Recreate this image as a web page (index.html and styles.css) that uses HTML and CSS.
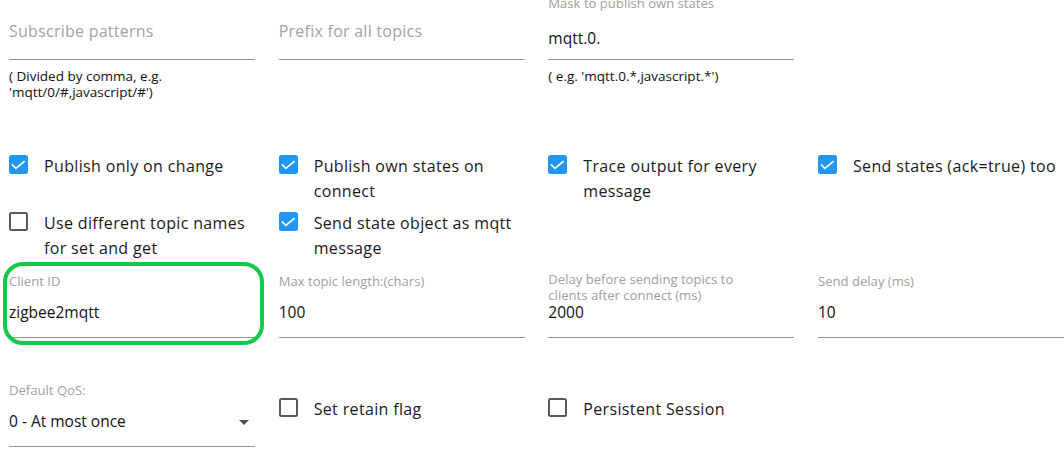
FILE: index.html
```html
<!DOCTYPE html>
<html lang="en">
<head>
<meta charset="utf-8">
<title>MQTT settings</title>
<link rel="stylesheet" href="styles.css">
</head>
<body>
<div class="form">

  <div class="row row-a">
    <div class="tf">
      <span class="tf-placeholder">Subscribe patterns</span>
      <div class="tf-input tf-input-a"></div>
      <div class="tf-helper">( Divided by comma, e.g. 'mqtt/0/#,javascript/#')</div>
    </div>
    <div class="tf">
      <span class="tf-placeholder">Prefix for all topics</span>
      <div class="tf-input tf-input-a"></div>
    </div>
    <div class="tf">
      <label class="tf-label">Mask to publish own states</label>
      <div class="tf-input tf-input-a">mqtt.0.</div>
      <div class="tf-helper">( e.g. 'mqtt.0.*,javascript.*')</div>
    </div>
    <div></div>
  </div>

  <div class="row row-b">
    <div class="cb">
      <svg class="cb-box" viewBox="0 0 19 19"><rect width="19" height="19" rx="2.5" class="cb-fill"/><path d="M3.6 10 L6.9 13.3 L15 6.6" class="cb-check"/></svg>
      <span class="cb-text">Publish only on change</span>
    </div>
    <div class="cb">
      <svg class="cb-box" viewBox="0 0 19 19"><rect width="19" height="19" rx="2.5" class="cb-fill"/><path d="M3.6 10 L6.9 13.3 L15 6.6" class="cb-check"/></svg>
      <span class="cb-text">Publish own states on connect</span>
    </div>
    <div class="cb">
      <svg class="cb-box" viewBox="0 0 19 19"><rect width="19" height="19" rx="2.5" class="cb-fill"/><path d="M3.6 10 L6.9 13.3 L15 6.6" class="cb-check"/></svg>
      <span class="cb-text">Trace output for every message</span>
    </div>
    <div class="cb">
      <svg class="cb-box" viewBox="0 0 19 19"><rect width="19" height="19" rx="2.5" class="cb-fill"/><path d="M3.6 10 L6.9 13.3 L15 6.6" class="cb-check"/></svg>
      <span class="cb-text">Send states (ack=true) too</span>
    </div>
  </div>

  <div class="row row-c">
    <div class="cb">
      <svg class="cb-box" viewBox="0 0 19 19"><rect x="1" y="1" width="17" height="17" rx="1.5" class="cb-empty"/></svg>
      <span class="cb-text">Use different topic names for set and get</span>
    </div>
    <div class="cb">
      <svg class="cb-box" viewBox="0 0 19 19"><rect width="19" height="19" rx="2.5" class="cb-fill"/><path d="M3.6 10 L6.9 13.3 L15 6.6" class="cb-check"/></svg>
      <span class="cb-text">Send state object as mqtt message</span>
    </div>
    <div></div>
    <div></div>
  </div>

  <div class="row row-d">
    <div class="tf">
      <div class="highlight"></div>
      <label class="tf-label">Client ID</label>
      <div class="tf-input">zigbee2mqtt</div>
    </div>
    <div class="tf">
      <label class="tf-label">Max topic length:(chars)</label>
      <div class="tf-input">100</div>
    </div>
    <div class="tf">
      <label class="tf-label tf-label-2">Delay before sending topics to clients after connect (ms)</label>
      <div class="tf-input">2000</div>
    </div>
    <div class="tf">
      <label class="tf-label">Send delay (ms)</label>
      <div class="tf-input">10</div>
    </div>
  </div>

  <div class="row row-e">
    <div class="tf">
      <label class="tf-label">Default QoS:</label>
      <div class="tf-input tf-select">0 - At most once</div>
      <svg class="select-arrow" viewBox="0 0 24 24"><path d="M7 10l5 5 5-5z"/></svg>
    </div>
    <div class="cb cb-e">
      <svg class="cb-box" viewBox="0 0 19 19"><rect x="1" y="1" width="17" height="17" rx="1.5" class="cb-empty"/></svg>
      <span class="cb-text">Set retain flag</span>
    </div>
    <div class="cb cb-e">
      <svg class="cb-box" viewBox="0 0 19 19"><rect x="1" y="1" width="17" height="17" rx="1.5" class="cb-empty"/></svg>
      <span class="cb-text">Persistent Session</span>
    </div>
    <div></div>
  </div>

</div>
</body>
</html>
```

FILE: styles.css
```css
html, body {
  margin: 0;
  padding: 0;
  background: #ffffff;
}

body {
  font-family: "Open Sans", "Noto Sans", sans-serif;
  color: #1a1a1a;
  overflow: hidden;
  width: 1064px;
  height: 464px;
}

.form {
  display: flex;
  flex-direction: column;
  padding-left: 9px;
}

.row {
  display: grid;
  grid-template-columns: repeat(4, 246px);
  column-gap: 23.67px;
  align-items: start;
}

.row-a { margin-top: -4.75px; }
.row-b { margin-top: 53.85px; }
.row-c { margin-top: 6.7px; }
.row-d { margin-top: 12.7px; }
.row-e { margin-top: 44.5px; }

/* text field */
.tf {
  position: relative;
  padding-top: 16px;
}

.tf-label {
  position: absolute;
  top: 0;
  left: 0;
  right: 0;
  font-size: 13.1px;
  line-height: 16px;
  color: #a0a0a0;
}

.tf-label-2 {
  top: -2.7px;
  right: 40px;
}

.tf-placeholder {
  position: absolute;
  top: 27px;
  left: 0;
  font-size: 16px;
  line-height: 19px;
  letter-spacing: 0.25px;
  color: #a3a3a3;
}

.tf-input {
  font-size: 15.5px;
  line-height: 19px;
  height: 19px;
  padding: 14px 0 14.5px;
  border-bottom: 1px solid #949494;
  color: #111111;
  white-space: nowrap;
}

.tf-input-a {
  padding: 18px 0 10.75px;
}

.tf-helper {
  margin-top: 8.25px;
  font-size: 13.5px;
  line-height: 16px;
  color: #111111;
}

.tf-select {
  padding-right: 24px;
}

.select-arrow {
  position: absolute;
  top: 27.3px;
  right: -1px;
  width: 24px;
  height: 24px;
  fill: #4f4f4f;
}

/* highlight annotation */
.highlight {
  position: absolute;
  left: -6.5px;
  top: -11px;
  width: 261px;
  height: 82.5px;
  box-sizing: border-box;
  border: 4px solid #12c94a;
  border-radius: 20px;
  pointer-events: none;
}

/* checkbox */
.cb {
  display: flex;
  align-items: flex-start;
}

.cb-e {
  margin-top: 15px;
}

.cb-box {
  flex: none;
  width: 19px;
  height: 19px;
  margin-top: 1px;
  margin-right: 16px;
}

.cb-fill {
  fill: #2196f3;
}

.cb-check {
  fill: none;
  stroke: #ffffff;
  stroke-width: 1.7;
  stroke-linecap: square;
}

.cb-empty {
  fill: none;
  stroke: #5a5a5a;
  stroke-width: 2;
}

.cb-text {
  font-size: 16px;
  line-height: 25px;
  letter-spacing: 0.35px;
  color: #1a1a1a;
}
```
